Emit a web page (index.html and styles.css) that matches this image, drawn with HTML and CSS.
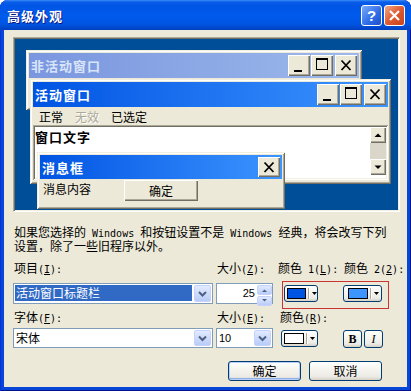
FILE: index.html
```html
<!DOCTYPE html>
<html>
<head>
	<meta charset="utf-8">
	<title>高级外观</title>
	<link rel="stylesheet" href="styles.css">
</head>
<body>
<div class="dlg">
	<div class="titlebar">
		<span class="caption">高级外观</span>
		<span class="capbtn help">?</span>
		<span class="capbtn close"><svg width="19" height="19" viewBox="0 0 19 19"><path d="M5 5l9 9M14 5l-9 9" stroke="#fff" stroke-width="2.2"/></svg></span>
	</div>
	<div class="client">
		<!-- preview desktop: the windows sit on a free canvas -->
		<div class="preview">
			<div class="win inactive">
				<div class="wtitle">
					<span class="wname">非活动窗口</span>
					<span class="cbtn"><svg width="22" height="21"><rect x="6" y="15" width="8" height="2"/></svg></span>
					<span class="cbtn gap1"><svg width="22" height="21"><rect x="5.5" y="3.5" width="11" height="11" fill="none" stroke="#000"/><rect x="5" y="3" width="12" height="2"/></svg></span>
					<span class="cbtn gap2"><svg width="22" height="21"><path d="M6.5 5.5l9 9.5M15.5 5.5l-9 9.5" stroke="#000" stroke-width="1.8"/></svg></span>
				</div>
			</div>
			<div class="win active">
				<div class="wtitle">
					<span class="wname">活动窗口</span>
					<span class="cbtn"><svg width="22" height="21"><rect x="6" y="15" width="8" height="2"/></svg></span>
					<span class="cbtn gap1"><svg width="22" height="21"><rect x="5.5" y="3.5" width="11" height="11" fill="none" stroke="#000"/><rect x="5" y="3" width="12" height="2"/></svg></span>
					<span class="cbtn gap2"><svg width="22" height="21"><path d="M6.5 5.5l9 9.5M15.5 5.5l-9 9.5" stroke="#000" stroke-width="1.8"/></svg></span>
				</div>
				<div class="menubar">
					<span>正常</span>
					<span class="disabled">无效</span>
					<span>已选定</span>
				</div>
				<div class="wtext">
					<span class="wtxt">窗口文字</span>
					<div class="vscroll">
						<span class="sbtn"><svg width="16" height="16"><path d="M4.5 10h7L8 6.5z"/></svg></span>
						<span class="strack"></span>
						<span class="sbtn"><svg width="16" height="16"><path d="M4.5 6.5h7L8 10z"/></svg></span>
					</div>
				</div>
			</div>
			<div class="win msgbox">
				<div class="wtitle">
					<span class="wname">消息框</span>
					<span class="cbtn gap2"><svg width="22" height="20"><path d="M6.5 5.5l9 9.5M15.5 5.5l-9 9.5" stroke="#000" stroke-width="1.8"/></svg></span>
				</div>
				<div class="msgbody">
					<span class="msgtxt">消息内容</span>
					<span class="okbtn">确定</span>
				</div>
			</div>
		</div>

		<div class="note">
			<div>如果您选择的<span class="h"> Windows </span>和按钮设置不是<span class="h"> Windows </span>经典，将会改写下列</div>
			<div>设置，除了一些旧程序以外。</div>
		</div>

		<div class="row lbl rowa">
			<span>项目<span class="h">(<u>I</u>):</span></span>
			<span>大小<span class="h">(<u>Z</u>):</span></span>
			<span>颜色<span class="h"> 1(<u>L</u>):</span></span>
			<span>颜色<span class="h"> 2(<u>2</u>):</span></span>
		</div>
		<div class="row rowb">
			<div class="combo item">
				<span class="val sel">活动窗口标题栏</span>
				<span class="drop"><svg width="17" height="17"><path d="M5 7l3.5 3.5L12 7" fill="none" stroke="#4D6185" stroke-width="2"/></svg></span>
			</div>
			<div class="spin">
				<span class="num">25</span>
				<span class="spinbtns">
					<span class="sp"><svg width="13" height="8"><path d="M4 6h5L6.5 3.5z" fill="#4D6185"/></svg></span>
					<span class="sp"><svg width="13" height="8"><path d="M4 2h5L6.5 4.5z" fill="#4D6185"/></svg></span>
				</span>
			</div>
			<div class="pick">
				<span class="colbtn c1"><span class="sw blue1"></span><span class="sep"></span><svg width="5" height="3"><path d="M0 0h5L2.5 3z"/></svg></span>
				<span class="colbtn c2"><span class="sw blue2"></span><span class="sep"></span><svg width="5" height="3"><path d="M0 0h5L2.5 3z"/></svg></span>
			</div>
		</div>
		<div class="row lbl rowc">
			<span>字体<span class="h">(<u>F</u>):</span></span>
			<span>大小<span class="h">(<u>E</u>):</span></span>
			<span class="lblr">颜色<span class="h">(<u>R</u>):</span></span>
		</div>
		<div class="row rowd">
			<div class="combo font">
				<span class="val">宋体</span>
				<span class="drop"><svg width="17" height="16"><path d="M5 6.5l3.5 3.5L12 6.5" fill="none" stroke="#4D6185" stroke-width="2"/></svg></span>
			</div>
			<div class="combo fsize">
				<span class="val num10">10</span>
				<span class="drop"><svg width="17" height="16"><path d="M5 6.5l3.5 3.5L12 6.5" fill="none" stroke="#4D6185" stroke-width="2"/></svg></span>
			</div>
			<span class="colbtn c3"><span class="sw white"></span><span class="sep"></span><svg width="5" height="3"><path d="M0 0h5L2.5 3z"/></svg></span>
			<div class="styles">
				<span class="xpbtn tb bold">B</span>
				<span class="xpbtn tb ital">I</span>
			</div>
		</div>

		<div class="actions">
			<span class="xpbtn pbtn default">确定</span>
			<span class="xpbtn pbtn">取消</span>
		</div>
	</div>
</div>
</body>
</html>
```

FILE: styles.css
```css
body { margin: 0; background: #fff; font: 12px/13px "Noto Sans CJK SC", sans-serif; color: #000; }
.h { font: 10px "DejaVu Sans Mono", monospace; }

/* outer dialog */
.dlg {
	width: 411px;
	height: 391px;
	display: flex;
	flex-direction: column;
	background: #0846D7;
	border-radius: 8px 8px 0 0;
	box-shadow: inset 1px 0 #0831D9, inset -1px 0 #00138C, inset 0 -1px #00138C;
}
.titlebar {
	height: 30px;
	flex: none;
	display: flex;
	align-items: center;
	padding: 0 6px 0 7px;
	border-radius: 8px 8px 0 0;
	background: linear-gradient(#3C8DF7 0, #0A5DE8 2px, #0055E5 6px, #005AEC 16px, #0054E2 24px, #0040BE 30px);
}
.caption { flex: 1; color: #fff; font-weight: bold; font-size: 13px; letter-spacing: 1px; text-shadow: 1px 1px #0A1883; }
.capbtn {
	width: 21px;
	height: 21px;
	box-sizing: border-box;
	border: 1px solid #fff;
	border-radius: 3px;
	display: flex;
	align-items: center;
	justify-content: center;
}
.help { background: linear-gradient(135deg, #7AAAF9, #2E6BE6 60%, #1D4FC8); color: #fff; font: bold 15px "Liberation Sans", sans-serif; }
.close { margin-left: 2px; background: linear-gradient(135deg, #F2A888, #DE5A30 50%, #C8421A); }
.client { flex: 1; margin: 0 4px 4px; background: #ECE9D8; }

/* preview area */
.preview {
	position: relative;
	margin: 7px 0 0 9px;
	width: 387px;
	height: 175px;
	box-sizing: border-box;
	background: #004E98;
	border: 1px solid;
	border-color: #ACA899 #fff #fff #ACA899;
	box-shadow: inset 1px 1px #716F64, inset -1px -1px #F1EFE2;
}
.win {
	position: absolute;
	box-sizing: border-box;
	padding: 3px;
	display: flex;
	flex-direction: column;
	background: #ECE9D8;
	box-shadow: inset 1px 1px #F1EFE2, inset -1px -1px #716F64, inset 2px 2px #fff, inset -2px -2px #ACA899;
}
.inactive { left: 12px; top: 12px; width: 336px; height: 60px; }
.active { left: 16px; top: 41px; width: 361px; height: 105px; }
.msgbox { left: 23px; top: 114px; width: 248px; height: 57px; }

.wtitle {
	height: 25px;
	flex: none;
	display: flex;
	align-items: center;
	padding-left: 2px;
	color: #fff;
	background: linear-gradient(to right, #0054E3, #3D95FF);
}
.inactive .wtitle { color: #D8E4F8; background: linear-gradient(to right, #7A96DF, #9DB9EB); }
.msgbox .wtitle { height: 24px; }
.wname { flex: 1; font-weight: bold; font-size: 13px; letter-spacing: 1px; }
.cbtn {
	width: 22px;
	height: 21px;
	display: block;
	background: #ECE9D8;
	box-shadow: inset 1px 1px #fff, inset -1px -1px #716F64, inset -2px -2px #ACA899;
}
.msgbox .cbtn { height: 20px; }
.cbtn svg { display: block; }
.gap1 { margin-left: 1px; }
.gap2 { margin: 0 2px 0 2px; }

.menubar { height: 18px; display: flex; align-items: center; gap: 12px; padding-left: 6px; }
.disabled { color: #ACA899; text-shadow: 1px 1px #fff; }

.wtext {
	height: 55px;
	box-sizing: border-box;
	padding: 2px;
	display: flex;
	background: #fff;
	box-shadow: inset 1px 1px #ACA899, inset -1px -1px #fff, inset 2px 2px #716F64, inset -2px -2px #F1EFE2;
}
.wtxt { flex: 1; padding-top: 3px; font-weight: bold; font-size: 13px; letter-spacing: 1px; }
.vscroll { width: 16px; display: flex; flex-direction: column; }
.sbtn { height: 16px; background: #ECE9D8; box-shadow: inset 1px 1px #fff, inset -1px -1px #716F64, inset -2px -2px #ACA899; }
.sbtn svg { display: block; }
.strack { height: 16px; background: #DAD6CA; }

.msgbody { display: flex; align-items: flex-start; }
.msgtxt { padding: 3px 0 0 3px; }
.okbtn {
	margin: 1px 0 0 33px;
	width: 74px;
	height: 21px;
	line-height: 21px;
	text-align: center;
	background: #ECE9D8;
	box-shadow: inset 1px 1px #fff, inset -1px -1px #716F64, inset -2px -2px #ACA899;
}

.note { margin: 13px 0 0 10px; white-space: nowrap; line-height: 14px; }

/* item / font form */
.row { display: grid; grid-template-columns: 203px 61px 66px 1fr; padding-left: 9px; }
.lbl > span { padding-left: 1px; }
.rowa { margin-top: 8px; }
.rowb { margin-top: 8px; height: 21px; }
.rowc { margin-top: 6px; }
.rowd { margin-top: 4px; height: 20px; }
.lbl > .lblr { padding-left: 3px; }

.combo {
	display: flex;
	box-sizing: border-box;
	border: 1px solid #7F9DB9;
	background: #fff;
}
.combo.item { width: 200px; height: 21px; }
.combo.font { width: 200px; height: 20px; }
.combo.fsize { width: 57px; height: 20px; }
.val { flex: 1; padding-left: 2px; line-height: 18px; }
.val.sel { margin: 1px 1px 2px 1px; padding-left: 1px; line-height: 15px; background: #316AC5; color: #fff; }
.num10 { font: 11px/18px "Liberation Sans", sans-serif; }
.drop {
	width: 17px;
	margin: 1px;
	box-sizing: border-box;
	border: 1px solid #C3D3FD;
	border-radius: 2px;
	background: linear-gradient(#E2EAFE, #B9CCF8);
}
.drop svg { display: block; margin: -1px 0 0 -1px; }

.spin {
	width: 57px;
	height: 21px;
	box-sizing: border-box;
	display: flex;
	border: 1px solid #7F9DB9;
	background: #fff;
}
.num { flex: 1; text-align: right; padding-right: 2px; font: 11px/19px "Liberation Sans", sans-serif; }
.spinbtns { width: 15px; margin: 1px 0 1px 0; display: flex; flex-direction: column; gap: 1px; }
.sp { flex: 1; border: 1px solid #C3D3FD; border-radius: 2px; background: linear-gradient(#E2EAFE, #B9CCF8); }
.sp svg { display: block; }

.pick { grid-column: 3 / 5; position: relative; display: flex; align-items: flex-start; }
.pick::after {
	content: "";
	position: absolute;
	left: 5px;
	top: -2px;
	width: 105px;
	height: 26px;
	border: 1px solid #CC3333;
}

.xpbtn, .colbtn {
	box-sizing: border-box;
	border: 1px solid #003C74;
	border-radius: 3px;
	background: linear-gradient(#FFFFFF, #F4F3EE 45%, #ECEBE6 80%, #D6D0C5);
}
.colbtn { display: flex; align-items: center; height: 17px; margin-top: 2px; padding-left: 2px; }
.colbtn svg { display: block; }
.c1 { width: 34px; margin-left: 7px; }
.c2 { width: 39px; margin-left: 25px; padding-left: 4px; }
.c3 { width: 37px; margin-left: 4px; }
.sw { width: 20px; height: 11px; box-sizing: border-box; border: 1px solid #000; }
.blue1 { background: #0054E3; }
.blue2 { background: #3D95FF; }
.white { background: #fff; }
.sep { width: 1px; height: 11px; margin: 0 3px 0 2px; background: #ACA899; box-shadow: 1px 0 #fff; }

.styles { display: flex; gap: 2px; align-items: flex-start; }
.tb { width: 19px; height: 18px; margin-top: 2px; display: flex; align-items: center; justify-content: center; font: 12px "Liberation Serif", serif; }
.bold { font-weight: bold; }
.ital { font-style: italic; }

.actions { display: flex; justify-content: flex-end; gap: 8px; margin-top: 13px; padding-right: 25px; }
.pbtn { width: 73px; height: 20px; line-height: 18px; text-align: center; }
.default { box-shadow: inset 0 0 0 1px #B9CFF7, inset 0 -1px 0 1px #8FB0E8; }
```
